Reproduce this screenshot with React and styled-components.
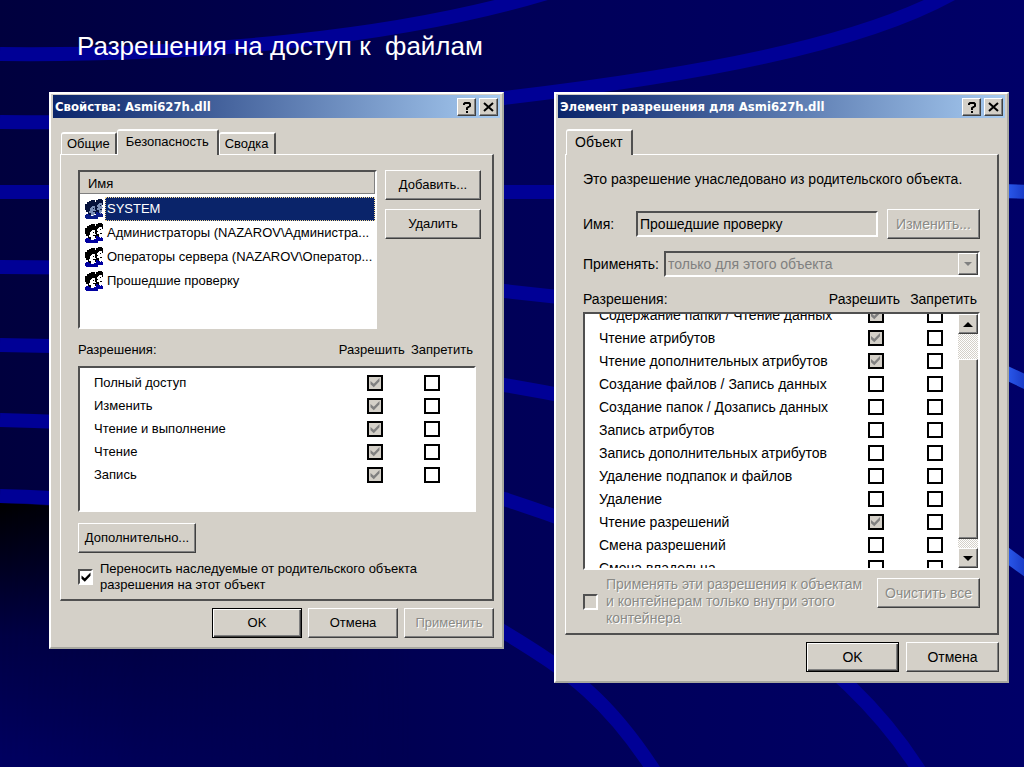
import React from "react";
import styled, { createGlobalStyle, css } from 'styled-components'

const users = [
    { name: "SYSTEM", selected: true },
    { name: "Администраторы (NAZAROV\\Администра..." },
    { name: "Операторы сервера (NAZAROV\\Оператор..." },
    { name: "Прошедшие проверку" },
]

const filePermissions = [
    { name: "Полный доступ", allow: true },
    { name: "Изменить", allow: true },
    { name: "Чтение и выполнение", allow: true },
    { name: "Чтение", allow: true },
    { name: "Запись", allow: true },
]

const entryPermissions = [
    { name: "Содержание папки / Чтение данных", allow: true },
    { name: "Чтение атрибутов", allow: true },
    { name: "Чтение дополнительных атрибутов", allow: true },
    { name: "Создание файлов / Запись данных" },
    { name: "Создание папок / Дозапись данных" },
    { name: "Запись атрибутов" },
    { name: "Запись дополнительных атрибутов" },
    { name: "Удаление подпапок и файлов" },
    { name: "Удаление" },
    { name: "Чтение разрешений", allow: true },
    { name: "Смена разрешений" },
    { name: "Смена владельца" },
]

export default function App() {
    return(
        <Slide>
            <GlobalStyle/>
            <Backdrop/>
            <Heading>{"Разрешения на доступ к  файлам"}</Heading>
            <Windows>
                <PropertiesWindow/>
                <EntryWindow/>
            </Windows>
        </Slide>
    );
}

function PropertiesWindow() {
    return(
        <Window aria-label="Свойства">
            <Caption title="Свойства: Asmi627h.dll"/>
            <Body>
                <Tabs>
                    <Tab>Общие</Tab>
                    <Tab $active>Безопасность</Tab>
                    <Tab>Сводка</Tab>
                </Tabs>
                <Panel $right={11}>
                    <UserArea>
                        <UserList>
                            <UserHead>Имя</UserHead>
                            <UserRows>
                                {users.map((user) => (
                                    <UserRow key={user.name}>
                                        <UsersIcon dim={user.selected}/>
                                        <UserName $selected={user.selected}>{user.name}</UserName>
                                    </UserRow>
                                ))}
                            </UserRows>
                        </UserList>
                        <UserButtons>
                            <Button>Добавить...</Button>
                            <Button>Удалить</Button>
                        </UserButtons>
                    </UserArea>
                    <ListLabels $top={12} $gap={6} $end={8}>
                        <span>Разрешения:</span>
                        <span>Разрешить</span>
                        <span>Запретить</span>
                    </ListLabels>
                    <PermissionBox $height={146} $top={7} $pad={3} $end={5}>
                        <Permissions rows={filePermissions} allowWidth={28} denyWidth={85}/>
                    </PermissionBox>
                    <MoreButton>Дополнительно...</MoreButton>
                    <InheritLabel>
                        <CheckBox type="checkbox" defaultChecked/>
                        <span>Переносить наследуемые от родительского объекта<br/>разрешения на этот объект</span>
                    </InheritLabel>
                </Panel>
                <Actions $gap={6}>
                    <ActionButton $primary $width={90}>OK</ActionButton>
                    <ActionButton $width={90}>Отмена</ActionButton>
                    <ActionButton $width={90} disabled>Применить</ActionButton>
                </Actions>
            </Body>
        </Window>
    );
}

function EntryWindow() {
    return(
        <Window aria-label="Элемент разрешения" $large>
            <Caption title="Элемент разрешения для Asmi627h.dll"/>
            <Body>
                <Tabs>
                    <Tab $active>Объект</Tab>
                </Tabs>
                <Panel $right={17}>
                    <Note>Это разрешение унаследовано из родительского объекта.</Note>
                    <NameRow>
                        <FieldLabel htmlFor="entry-name">Имя:</FieldLabel>
                        <NameInput id="entry-name" readOnly value="Прошедшие проверку"/>
                        <ChangeButton disabled>Изменить...</ChangeButton>
                    </NameRow>
                    <ApplyRow>
                        <label htmlFor="entry-scope">Применять:</label>
                        <SelectBox>
                            <Select id="entry-scope" disabled>
                                <option>только для этого объекта</option>
                            </Select>
                            <Arrow>
                                <svg width="8" height="5"><path d="M0 0h8L4 4z" fill="#808080"/></svg>
                            </Arrow>
                        </SelectBox>
                    </ApplyRow>
                    <ListLabels $top={13} $gap={10} $end={3}>
                        <span>Разрешения:</span>
                        <span>Разрешить</span>
                        <span>Запретить</span>
                    </ListLabels>
                    <PermissionBox $height={258} $top={4} $fixed>
                        <Scrolled>
                            <Permissions rows={entryPermissions} allowWidth={73} denyWidth={46}/>
                        </Scrolled>
                        <ScrollBar>
                            <ScrollButton aria-label="Вверх">
                                <svg width="10" height="5"><path d="M5 0l5 5H0z"/></svg>
                            </ScrollButton>
                            <ScrollTrack><ScrollThumb/></ScrollTrack>
                            <ScrollButton aria-label="Вниз">
                                <svg width="10" height="5"><path d="M0 0h10L5 5z"/></svg>
                            </ScrollButton>
                        </ScrollBar>
                    </PermissionBox>
                    <ClearRow>
                        <ScopeLabel>
                            <CheckBox type="checkbox" disabled/>
                            <span>Применять эти разрешения к объектам<br/>и контейнерам только внутри этого<br/>контейнера</span>
                        </ScopeLabel>
                        <ClearButton disabled>Очистить все</ClearButton>
                    </ClearRow>
                </Panel>
                <Actions $gap={7}>
                    <ActionButton $primary $width={93}>OK</ActionButton>
                    <ActionButton $width={93}>Отмена</ActionButton>
                </Actions>
            </Body>
        </Window>
    );
}

function Caption({ title }) {
    return(
        <TitleBar>
            <TitleText>{title}</TitleText>
            <TitleButton aria-label="Справка">
                <svg width="10" height="12" fill="none" stroke="#000" strokeWidth="2">
                    <path d="M2 4V3l1-1h4l1 1v2L5 7v2M4 11h2"/>
                </svg>
            </TitleButton>
            <TitleButton aria-label="Закрыть">
                <svg width="11" height="10" fill="none" stroke="#000" strokeWidth="2">
                    <path d="M1 1l9 8M10 1L1 9"/>
                </svg>
            </TitleButton>
        </TitleBar>
    );
}

function Permissions({ rows, allowWidth, denyWidth }) {
    return(
        <Table>
            <tbody>
                {rows.map((row) => (
                    <tr key={row.name}>
                        <NameCell>{row.name}</NameCell>
                        <CheckCell $width={allowWidth}>
                            <PermissionCheck
                                type="checkbox"
                                aria-label={row.name + ": разрешить"}
                                defaultChecked={row.allow}
                                disabled={row.allow}
                            />
                        </CheckCell>
                        <CheckCell $width={denyWidth}>
                            <PermissionCheck type="checkbox" aria-label={row.name + ": запретить"}/>
                        </CheckCell>
                    </tr>
                ))}
            </tbody>
        </Table>
    );
}

function UsersIcon({ dim }) {
    const hair = dim ? "#06123c" : "#000"
    const face = dim ? "#7c90b8" : "#fff"
    const coat = dim ? "#0a1c88" : "#0000a0"
    return(
        <svg width="20" height="20" viewBox="0 0 20 20" shapeRendering="crispEdges">
            <path fill={hair} d="M3 3h2V2h2V1h4v2h1V1h2V0h4v1h1v5h-1v2h-1v5h-1v2H8v1H4v-3H2v-2H1V5h2z"/>
            <path fill={face} d="M6 9h1V8h1V7h3v4h1v1h-1v3H9v1H7v-2H5v-2h1z"/>
            <path fill={face} d="M13 6h1V5h1V4h3v4h1v1h-1v4h-3v-2h-2V9h1V8h-1z"/>
            <path fill={hair} d="M9 9h1v1H9zM16 6h1v1h-1zM9 12h2v1H9zM16 10h2v1h-2z"/>
            <path fill={coat} d="M2 15h3v1h2v1h3v-1h2v-3h2v1h4v1h1v3h-5v2H2v-1H1v-3h1z"/>
            <path fill={face} d="M8 15h2v2H9v-1H8zM15 13h2v2h-1v-1h-1z"/>
        </svg>
    );
}

function Backdrop() {
    return(
        <BackdropArt viewBox="0 0 1024 767" preserveAspectRatio="none" aria-hidden="true">
            <defs>
                <linearGradient id="sky" x1="0" x2="1" y1="0" y2="0">
                    <stop offset="0" stopColor="#00003e"/>
                    <stop offset="0.5" stopColor="#000058"/>
                    <stop offset="1" stopColor="#000068"/>
                </linearGradient>
                <linearGradient id="ground" x1="0" x2="0" y1="0" y2="1">
                    <stop offset="0" stopColor="#000000"/>
                    <stop offset="0.5" stopColor="#000044"/>
                    <stop offset="1" stopColor="#000062"/>
                </linearGradient>
                <linearGradient id="fade" x1="0" x2="1" y1="0" y2="0">
                    <stop offset="0" stopColor="#fff"/>
                    <stop offset="0.4" stopColor="#fff" stopOpacity="0"/>
                </linearGradient>
                <mask id="leftOnly"><rect width="1024" height="767" fill="url(#fade)"/></mask>
                <linearGradient id="glow" x1="1005" x2="1024" y1="0" y2="0" gradientUnits="userSpaceOnUse">
                    <stop offset="0" stopColor="#2c5cf0"/>
                    <stop offset="1" stopColor="#1a3cc8"/>
                </linearGradient>
            </defs>
            <rect width="1024" height="767" fill="url(#sky)"/>
            <path d="M0 503C180 508 380 560 520 650C580 690 620 730 640 767H0z" fill="url(#ground)" mask="url(#leftOnly)"/>
            <g fill="none" stroke="#000096" strokeWidth="14">
                <path d="M0 54C200 56 400 38 550-8"/>
                <path d="M0 122C240 124 420 112 504 98C690 76 860 46 955-8"/>
                <path d="M0 192H1008"/>
                <path d="M0 267C220 268 380 277 504 291C700 312 880 335 1008 374"/>
                <path d="M0 345C200 347 360 362 504 385C700 418 900 480 1008 556"/>
                <path d="M0 420C200 424 370 452 504 499C700 562 845 650 922 775"/>
                <path d="M0 496C200 500 370 552 504 632C570 672 610 700 660 780"/>
            </g>
            <g fill="none" stroke="url(#glow)" strokeWidth="14">
                <path d="M1000 191L1030 192"/>
                <path d="M1000 370L1030 384"/>
                <path d="M1000 550L1030 572"/>
            </g>
        </BackdropArt>
    );
}

const GlobalStyle = createGlobalStyle`
    * {
        box-sizing: border-box;
    }
    body {
        margin: 0;
        background: #00005a;
        font-family: "Liberation Sans", Arial, sans-serif;
    }
    button, input, select {
        font: inherit;
        color: inherit;
    }
    svg {
        display: block;
        flex: none;
    }
`

const raised = css`
    border: 1px solid;
    border-color: #fff #404040 #404040 #fff;
    box-shadow: inset -1px -1px 0 #808080;
`
const sunken = css`
    border: 2px solid;
    border-color: #505050 #fff #fff #505050;
`
const disabledText = css`
    color: #8a8a86;
    text-shadow: 1px 1px 0 #fff;
`

const Slide = styled.main`
    position: relative;
    min-height: 100vh;
    padding: 30px 15px 30px 49px;
    overflow: hidden;
`
const BackdropArt = styled.svg`
    position: absolute;
    inset: 0;
    width: 100%;
    height: 100%;
    z-index: -1;
`
const Heading = styled.h1`
    margin: 0 0 30px 28px;
    font-size: 26px;
    line-height: 32px;
    font-weight: 400;
    color: #fff;
    white-space: pre;
`
const Windows = styled.div`
    display: grid;
    grid-template-columns: 1fr 1fr;
    gap: 50px;
    align-items: start;
`
const Window = styled.section`
    border: 2px solid;
    border-color: #fff #a8a8a0 #a8a8a0 #fff;
    padding: 1px 2px 2px;
    background: #d4d0c8;
    font-size: ${p => p.$large ? 14 : 13}px;
    line-height: 16px;
    color: #000;
`
const TitleBar = styled.header`
    display: flex;
    align-items: center;
    gap: 3px;
    height: 23px;
    padding: 0 2px;
    background: linear-gradient(90deg, #0a246a, #a6caf0);
`
const TitleText = styled.h2`
    flex: 1;
    margin: 0;
    font-family: "DejaVu Sans Condensed", "DejaVu Sans", sans-serif;
    font-size: 13px;
    font-weight: 700;
    color: #fff;
    white-space: nowrap;
`
const TitleButton = styled.button`
    display: flex;
    align-items: center;
    justify-content: center;
    width: 19px;
    height: 18px;
    padding: 0;
    background: #d4d0c8;
    ${raised}
`
const Body = styled.div`
    padding: 11px 6px 7px 7px;
`
const Tabs = styled.div`
    display: flex;
    align-items: flex-end;
    height: 25px;
    padding-left: 1px;
`
const Tab = styled.button`
    position: relative;
    height: ${p => p.$active ? 26 : 22}px;
    margin-bottom: ${p => p.$active ? -1 : 0}px;
    padding: ${p => p.$active ? "0 8px 2px" : "0 5px"};
    border: solid;
    border-width: 2px 2px 0 1px;
    border-color: #fff #505050 #fff #fff;
    border-radius: 3px 2px 0 0;
    background: #d4d0c8;
`
const Panel = styled.div`
    padding: 15px ${p => p.$right}px 6px 17px;
    border: solid;
    border-width: 1px 2px 2px 1px;
    border-color: #fff #505050 #505050 #fff;
`
const Button = styled.button`
    height: 30px;
    padding: 0 4px;
    background: #d4d0c8;
    white-space: nowrap;
    ${raised}
    &:disabled {
        ${disabledText}
    }
`
const UserArea = styled.div`
    display: flex;
    gap: 8px;
`
const UserList = styled.div`
    flex: 1;
    min-width: 0;
    height: 159px;
    background: #fff;
    ${sunken}
`
const UserHead = styled.div`
    height: 22px;
    padding: 4px 8px 0;
    border-right: 1px solid #808080;
    border-bottom: 1px solid #808080;
    background: #d4d0c8;
`
const UserRows = styled.ul`
    margin: 0;
    padding: 3px 0 0 4px;
    list-style: none;
`
const UserRow = styled.li`
    display: flex;
    align-items: center;
    gap: 1px;
    height: 24px;
`
const UserName = styled.span`
    flex: 1;
    min-width: 0;
    padding: 3px 0 3px 1px;
    border: 1px dotted transparent;
    white-space: nowrap;
    ${p => p.$selected && css`
        border-color: #f5db95;
        background: #0a246a;
        color: #fff;
    `}
`
const UserButtons = styled.div`
    display: flex;
    flex-direction: column;
    gap: 9px;
    width: 96px;
`
const ListLabels = styled.div`
    display: flex;
    gap: ${p => p.$gap}px;
    margin-top: ${p => p.$top}px;
    padding-right: ${p => p.$end}px;
    line-height: 18px;

    span:first-child {
        flex: 1;
    }
`
const PermissionBox = styled.div`
    display: flex;
    align-items: flex-start;
    margin-top: ${p => p.$top}px;
    margin-right: ${p => p.$end || 0}px;
    padding-top: ${p => p.$pad || 0}px;
    min-height: ${p => p.$height}px;
    height: ${p => p.$fixed ? p.$height + "px" : "auto"};
    overflow: hidden;
    background: #fff;
    ${sunken}
`
const Scrolled = styled.div`
    flex: 1;
    margin-top: -11px;
`
const Table = styled.table`
    width: 100%;
    border-collapse: collapse;
`
const NameCell = styled.td`
    height: 23px;
    padding: 0 0 0 14px;
    white-space: nowrap;
`
const CheckCell = styled.td`
    width: ${p => p.$width}px;
    padding: 0;

    input {
        display: block;
        margin: 0 auto;
    }
`
const tick = css`
    content: "";
    display: block;
    width: 10px;
    height: 10px;
    clip-path: polygon(5% 35%, 38% 62%, 95% 5%, 95% 38%, 38% 98%, 5% 68%);
`
const PermissionCheck = styled.input`
    appearance: none;
    width: 16px;
    height: 16px;
    padding: 1px;
    border: 2px solid #000;
    background: #fff;

    &:disabled {
        background: #d4d0c8;
    }
    &:checked::before {
        ${tick}
        background: #808080;
    }
`
const CheckBox = styled.input`
    appearance: none;
    flex: none;
    width: 15px;
    height: 16px;
    margin: 0;
    padding: 1px;
    background: #fff;
    ${sunken}

    &:disabled {
        background: #d4d0c8;
    }
    &:checked::before {
        ${tick}
        background: #000;
    }
`
const MoreButton = styled(Button)`
    display: block;
    width: 118px;
    margin-top: 11px;
`
const InheritLabel = styled.label`
    display: flex;
    align-items: center;
    gap: 7px;
    margin-top: 8px;
`
const Actions = styled.footer`
    display: flex;
    justify-content: flex-end;
    gap: ${p => p.$gap}px;
    margin-top: 7px;
`
const ActionButton = styled(Button)`
    width: ${p => p.$width}px;
    ${p => p.$primary && css`
        border-color: #000;
        box-shadow: inset 1px 1px 0 #fff, inset -1px -1px 0 #404040, inset -2px -2px 0 #808080;
    `}
`
const Note = styled.p`
    margin: 1px 0 0;
    white-space: nowrap;
`
const NameRow = styled.div`
    display: flex;
    align-items: center;
    gap: 9px;
    margin-top: 22px;
`
const FieldLabel = styled.label`
    width: 44px;
`
const NameInput = styled.input`
    flex: 1;
    min-width: 0;
    height: 26px;
    padding: 0 2px;
    background: #d4d0c8;
    ${sunken}
`
const ChangeButton = styled(Button)`
    width: 93px;
`
const ApplyRow = styled.div`
    display: flex;
    align-items: center;
    gap: 5px;
    margin-top: 12px;
`
const SelectBox = styled.div`
    display: flex;
    flex: 1;
    height: 26px;
    ${sunken}
`
const Select = styled.select`
    appearance: none;
    flex: 1;
    min-width: 0;
    padding: 0 2px;
    border: 0;
    background: #d4d0c8;
    color: #808080;
    opacity: 1;
`
const Arrow = styled.span`
    display: flex;
    align-items: center;
    justify-content: center;
    width: 20px;
    background: #d4d0c8;
    ${raised}
`
const ScrollBar = styled.div`
    display: flex;
    flex-direction: column;
    align-self: stretch;
    width: 20px;
`
const ScrollButton = styled.button`
    display: flex;
    align-items: center;
    justify-content: center;
    height: 20px;
    padding: 0;
    background: #d4d0c8;
    ${raised}
`
const ScrollTrack = styled.div`
    flex: 1;
    padding: 25px 0 9px;
    background: repeating-conic-gradient(#fff 0 25%, #d4d0c8 0 50%) 0 0 / 2px 2px;
`
const ScrollThumb = styled.div`
    height: 100%;
    background: #d4d0c8;
    ${raised}
`
const ClearRow = styled.div`
    display: flex;
    align-items: flex-start;
    justify-content: space-between;
    margin-top: 6px;
`
const ScopeLabel = styled.label`
    display: flex;
    align-items: center;
    gap: 8px;
    line-height: 17px;
    white-space: nowrap;
    ${disabledText}
`
const ClearButton = styled(Button)`
    width: 103px;
    margin-top: 2px;
`
